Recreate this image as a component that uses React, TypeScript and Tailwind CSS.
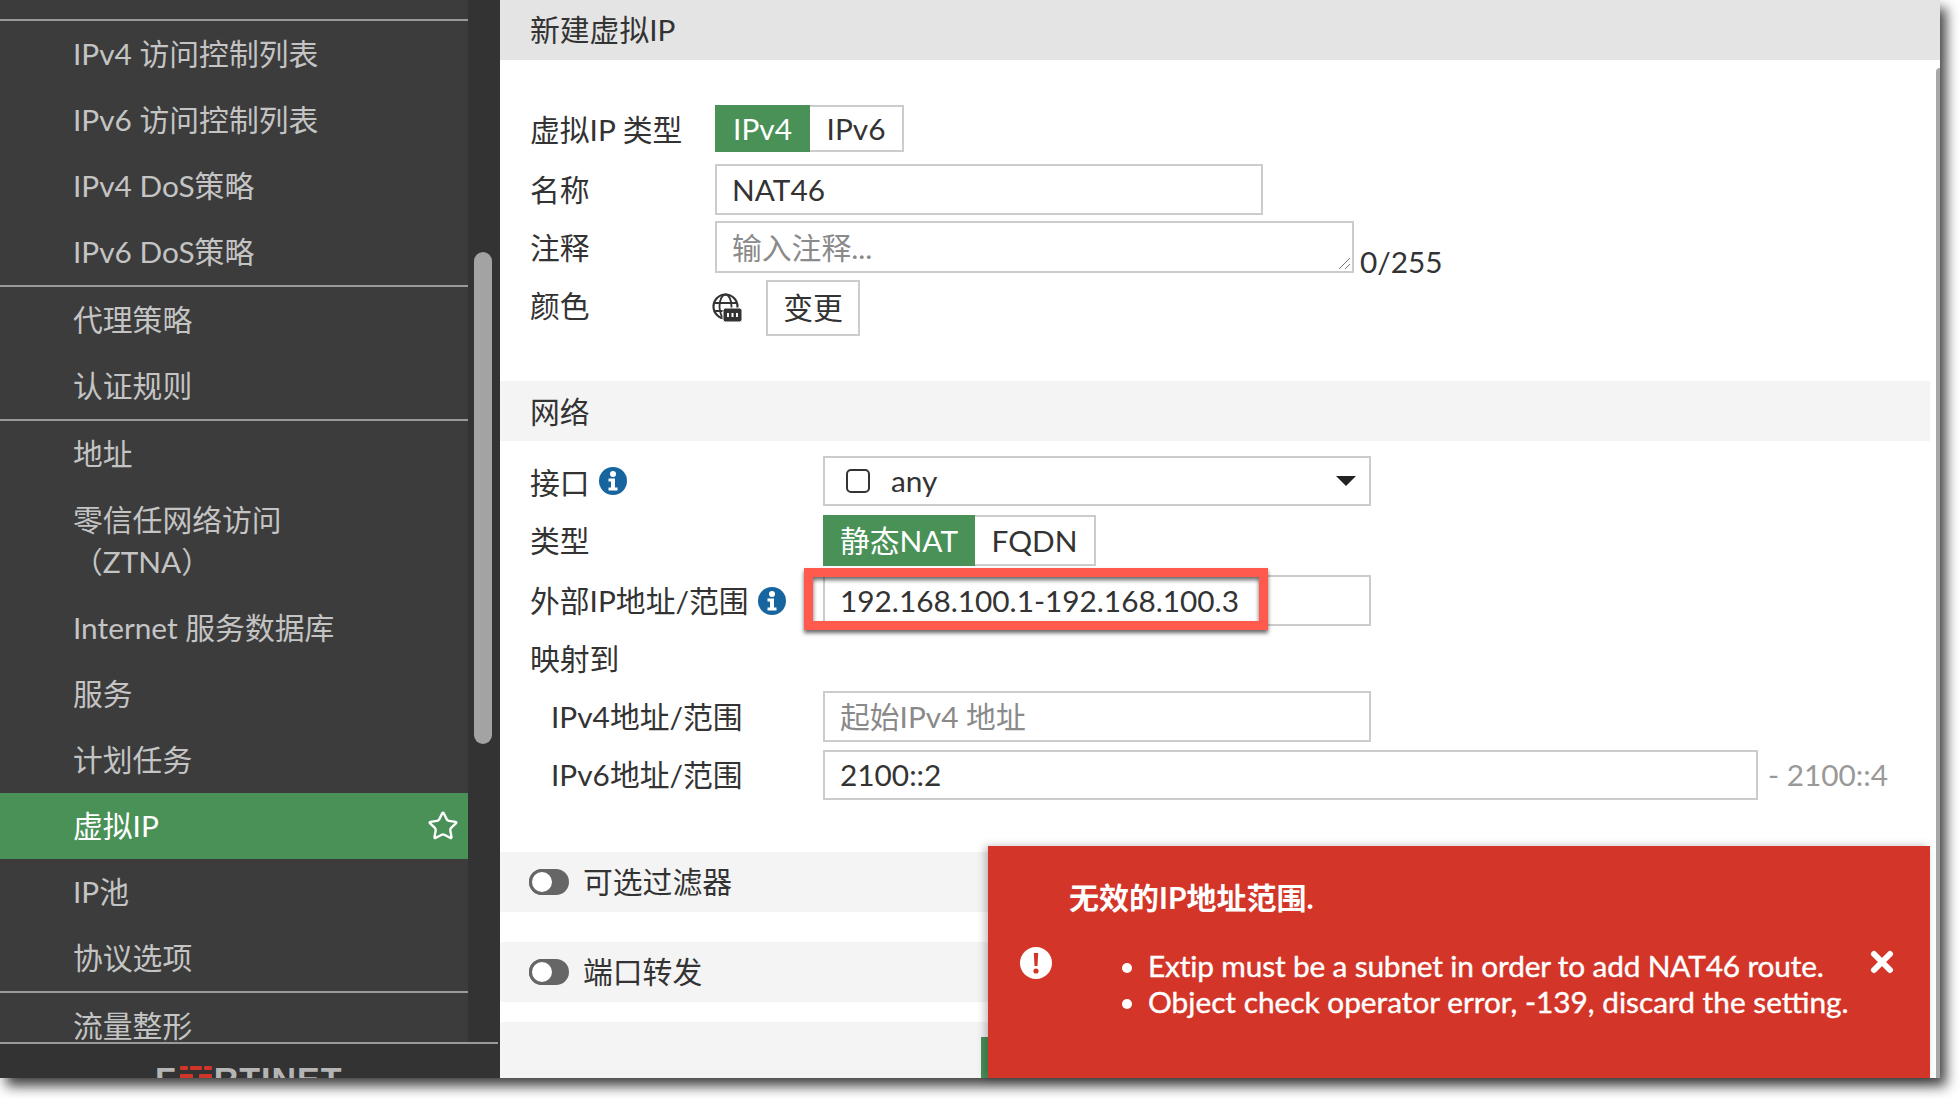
import { Star } from 'lucide-react'

const FONT = "font-['Lato','Noto_Sans_CJK_SC',sans-serif]"

type NavItem = { label: string; second?: string; active?: boolean } | 'divider'

const NAV: NavItem[] = [
  'divider',
  { label: 'IPv4 访问控制列表' },
  { label: 'IPv6 访问控制列表' },
  { label: 'IPv4 DoS策略' },
  { label: 'IPv6 DoS策略' },
  'divider',
  { label: '代理策略' },
  { label: '认证规则' },
  'divider',
  { label: '地址' },
  { label: '零信任网络访问', second: '（ZTNA）' },
  { label: 'Internet 服务数据库' },
  { label: '服务' },
  { label: '计划任务' },
  { label: '虚拟IP', active: true },
  { label: 'IP池' },
  { label: '协议选项' },
  'divider',
  { label: '流量整形' },
]

function InfoIcon() {
  return (
    <svg className="h-[28px] w-[28px] shrink-0" viewBox="0 0 28 28">
      <circle cx="14" cy="14" r="14" fill="#17659f" />
      <circle cx="14" cy="7" r="3" fill="#fff" />
      <path d="M9.5 11.5h6.5v9h2.5v3h-9v-3H12v-6H9.5z" fill="#fff" />
    </svg>
  )
}

function GlobeIcon() {
  return (
    <svg className="h-[30px] w-[30px]" viewBox="0 0 30 30" fill="none">
      <circle cx="13.5" cy="13.5" r="12" stroke="#333" strokeWidth="2.2" />
      <ellipse cx="13.5" cy="13.5" rx="6" ry="12" stroke="#333" strokeWidth="1.8" />
      <path d="M2 10h23M2 18h23" stroke="#333" strokeWidth="1.8" />
      <rect x="11" y="15" width="19" height="14" rx="2.5" fill="#333" stroke="#fff" strokeWidth="1" />
      <path d="M16 20v4M20.5 20v4M25 20v4" stroke="#fff" strokeWidth="2" />
    </svg>
  )
}

function Sidebar() {
  return (
    <aside className="flex h-full w-[500px] shrink-0 flex-col bg-[#333333]">
      <div className="relative h-[1042px] shrink-0 overflow-hidden">
        <div className="h-full w-[468px] bg-[#3c3c3c] pt-[19px]">
          {NAV.map((item, i) =>
            item === 'divider' ? (
              <div key={i} className="h-[2px] bg-[#9a9a9a]" />
            ) : (
              <div
                key={i}
                className={`flex items-center justify-between pl-[73px] pr-[9px] text-[29.8px] ${
                  item.active ? 'bg-[#4a9158] text-white' : 'text-[#c4c4c4]'
                } ${item.second ? 'h-[108px]' : 'h-[66px]'}`}
              >
                <div className="leading-[42px]">
                  <div>{item.label}</div>
                  {item.second && <div>{item.second}</div>}
                </div>
                {item.active && <Star className="h-[32px] w-[32px] text-white" strokeWidth={1.8} />}
              </div>
            ),
          )}
        </div>
        <div className="absolute left-[474px] top-[252px] h-[492px] w-[18px] rounded-[9px] bg-[#a3a3a3]" />
      </div>
      <div className="relative flex-1 overflow-hidden">
        <div className="mr-[2px] h-[2px] bg-[#9a9a9a]" />
        <div className="absolute left-[155px] top-[20px] flex items-start">
          <span className="font-['Liberation_Sans',sans-serif] text-[34px] font-bold leading-none text-[#b5b5b5]">F</span>
          <svg className="ml-[4px] mr-[2px] mt-[4px] h-[24px] w-[32px]" viewBox="0 0 32 24">
            <rect x="0" y="0" width="8" height="4" rx="1" fill="#d0352a" />
            <rect x="10" y="0" width="12" height="4" rx="1" fill="#d0352a" />
            <rect x="24" y="0" width="8" height="4" rx="1" fill="#d0352a" />
            <rect x="0" y="8" width="13" height="6" rx="1" fill="#d0352a" />
            <rect x="19" y="8" width="13" height="6" rx="1" fill="#d0352a" />
          </svg>
          <span className="font-['Liberation_Sans',sans-serif] text-[34px] font-bold leading-none tracking-[1px] text-[#b5b5b5]">RTINET</span>
        </div>
      </div>
    </aside>
  )
}

function Toggle({ options, h, widths }: { options: string[]; h: string; widths: string[] }) {
  return (
    <div className={`flex ${h}`}>
      {options.map((o, i) =>
        i === 0 ? (
          <div key={o} className={`flex items-center justify-center bg-[#4a9158] pt-[1px] text-white ${widths[i]}`}>
            {o}
          </div>
        ) : (
          <div key={o} className={`flex items-center justify-center border-2 border-l-0 border-[#cccccc] bg-white pt-[1px] ${widths[i]}`}>
            {o}
          </div>
        ),
      )}
    </div>
  )
}

function Section({ children, className }: { children: React.ReactNode; className?: string }) {
  return <div className={`flex h-[60px] items-center bg-[#f4f4f4] pl-[29px] ${className ?? ''}`}>{children}</div>
}

function Switch() {
  return (
    <div className="mr-[14px] flex h-[26px] w-[40px] items-center rounded-full bg-[#666666]">
      <div className="h-[26px] w-[26px] rounded-full border-[3px] border-[#666666] bg-white" />
    </div>
  )
}

export default function App() {
  return (
    <div className={`${FONT} h-[1098px] w-[1960px] overflow-hidden bg-white text-[29.8px] leading-[40px] text-[#333333]`}>
      <div className="relative flex h-[1078px] w-[1940px] shadow-[6px_8px_12px_rgba(0,0,0,0.75)]">
        <Sidebar />
        <main className="relative w-[1440px] bg-white">
          <div className="flex h-[60px] items-center bg-[#e4e4e4] pl-[30px]">新建虚拟IP</div>

          <div className="mr-[10px]">
            <div className="ml-[30px] mt-[45px] flex items-center">
              <div className="w-[185px] pt-[3px]">虚拟IP 类型</div>
              <Toggle options={['IPv4', 'IPv6']} h="h-[47px]" widths={['w-[95px]', 'w-[94px]']} />
            </div>
            <div className="ml-[30px] mt-[12px] flex items-center">
              <div className="w-[185px]">名称</div>
              <div className="flex h-[51px] w-[548px] items-center border-2 border-[#cccccc] pl-[15px]">NAT46</div>
            </div>
            <div className="ml-[30px] mt-[6px] flex items-center">
              <div className="w-[185px] pt-[1px]">注释</div>
              <div className="relative flex h-[52px] w-[639px] items-center border-2 border-[#cccccc] pl-[15px] pt-[1px] text-[#8a8a8a]">
                输入注释...
                <svg className="absolute bottom-[1px] right-[1px] h-[14px] w-[14px]" viewBox="0 0 14 14">
                  <path d="M2 13 13 2M8 13l5-5" stroke="#777" strokeWidth="1" />
                </svg>
              </div>
              <div className="-mb-[7px] ml-[6px] self-end leading-[36px]">0/255</div>
            </div>
            <div className="ml-[30px] mt-[7px] flex items-center">
              <div className="w-[182px] pb-[4px]">颜色</div>
              <GlobeIcon />
              <div className="ml-[24px] flex h-[56px] w-[94px] items-center justify-center border-2 border-[#cccccc]">变更</div>
            </div>

            <Section className="mt-[45px]">
              <span className="pl-[1px] pt-[1px]">网络</span>
            </Section>

            <div className="ml-[30px] mt-[15px] flex items-center">
              <div className="flex w-[293px] items-center gap-[9px]">
                <span className="pt-[3px]">接口</span> <InfoIcon />
              </div>
              <div className="flex h-[50px] w-[548px] items-center border-2 border-[#cccccc] pl-[21px] pr-[13px]">
                <div className="h-[24px] w-[24px] rounded-[5px] border-2 border-[#333333]" />
                <span className="ml-[21px] flex-1">any</span>
                <svg className="h-[10px] w-[20px]" viewBox="0 0 20 10">
                  <path d="M0 0h20L10 10z" fill="#222" />
                </svg>
              </div>
            </div>
            <div className="ml-[30px] mt-[9px] flex items-center">
              <div className="w-[293px] pt-[1px]">类型</div>
              <Toggle options={['静态NAT', 'FQDN']} h="h-[51px]" widths={['w-[152px]', 'w-[121px]']} />
            </div>
            <div className="ml-[30px] mt-[9px] flex items-center">
              <div className="flex w-[293px] items-center gap-[9px]">
                外部IP地址/范围 <InfoIcon />
              </div>
              <div className="flex h-[51px] w-[548px] items-center border-2 border-[#cccccc] pl-[15px]">192.168.100.1-192.168.100.3</div>
            </div>
            <div className="ml-[30px] mt-[8px] flex h-[50px] items-center">映射到</div>
            <div className="ml-[51px] mt-[7px] flex items-center">
              <div className="w-[272px] pt-[1px]">IPv4地址/范围</div>
              <div className="flex h-[51px] w-[548px] items-center border-2 border-[#cccccc] pl-[15px] pt-[1px] text-[#8a8a8a]">起始IPv4 地址</div>
            </div>
            <div className="ml-[51px] mt-[8px] flex items-center">
              <div className="w-[272px]">IPv6地址/范围</div>
              <div className="flex h-[50px] w-[935px] items-center border-2 border-[#cccccc] pl-[15px]">2100::2</div>
              <span className="ml-[10px] text-[#999999]">- 2100::4</span>
            </div>

            <Section className="mt-[52px]">
              <Switch />
              可选过滤器
            </Section>
            <Section className="mt-[30px]">
              <Switch />
              端口转发
            </Section>
            <div className="mt-[20px] flex h-[56px] items-end bg-[#f4f4f4] pl-[481px]">
              <div className="h-[41px] w-[120px] bg-[#4a9158]" />
            </div>
          </div>

          <div className="absolute right-0 top-[68px] h-[1010px] w-[4px] rounded-tl-[4px] bg-[#a8a8a8]" />

          {/* annotation round the external IP field */}
          <div className="absolute left-[304px] top-[568px] h-[62px] w-[464px] border-[9px] border-[#ff5a4d] shadow-[0_3px_4px_rgba(0,0,0,0.6),inset_0_3px_4px_rgba(0,0,0,0.6)]" />

          <div className="absolute bottom-0 left-[488px] flex h-[232px] w-[942px] items-center bg-[#d33628] text-white shadow-[-3px_0_8px_rgba(0,0,0,0.25)]">
            <svg className="ml-[32px] mt-[101px] h-[32px] w-[32px] shrink-0 self-start" viewBox="0 0 32 32">
              <circle cx="16" cy="16" r="16" fill="#fff" />
              <path d="M13.8 6h4.4l-.7 13h-3z" fill="#d33628" />
              <circle cx="16" cy="24" r="2.6" fill="#d33628" />
            </svg>
            <div className="ml-[17px] flex-1 self-start pt-[33px]">
              <div className="text-[30px] font-bold leading-[36px]">无效的IP地址范围.</div>
              <ul className="mt-[33px] list-disc pl-[79px] leading-[36px] [-webkit-text-stroke:0.4px_white]">
                <li className="tracking-[-0.15px]">Extip must be a subnet in order to add NAT46 route.</li>
                <li>Object check operator error, -139, discard the setting.</li>
              </ul>
            </div>
            <svg className="mr-[36px] mt-[104px] h-[24px] w-[24px] shrink-0 self-start" viewBox="0 0 24 24">
              <path d="M4 4l16 16M20 4 4 20" stroke="#fff" strokeWidth="6" strokeLinecap="round" />
            </svg>
          </div>
        </main>
      </div>
    </div>
  )
}
